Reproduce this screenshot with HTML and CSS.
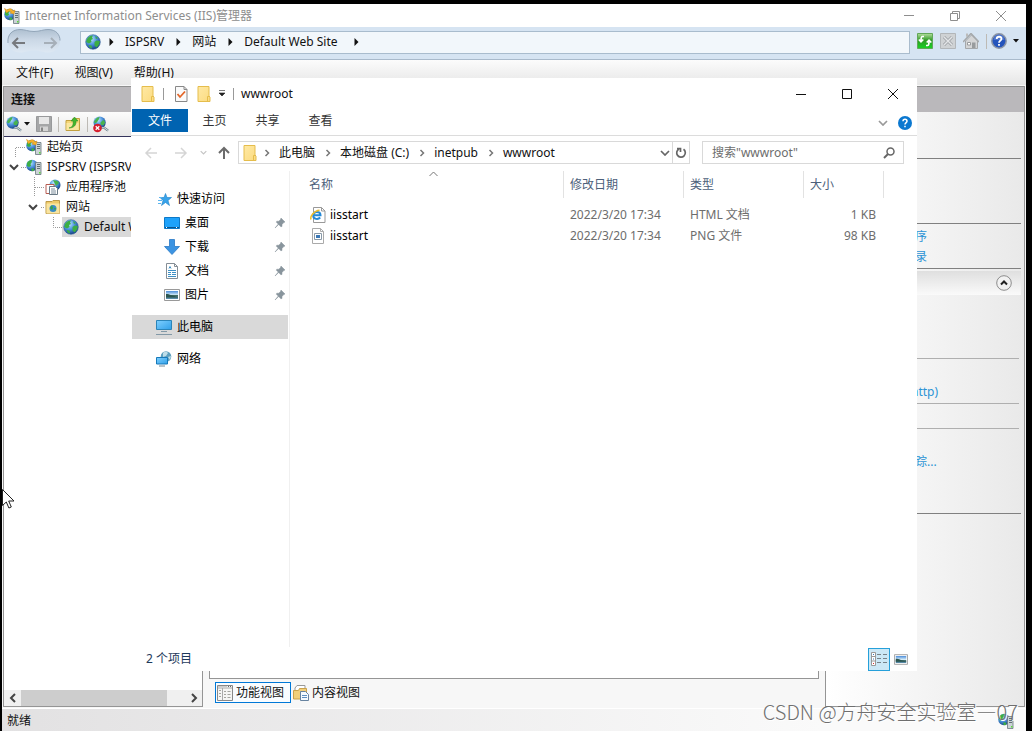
FILE: index.html
```html
<!DOCTYPE html>
<html lang="zh-CN">
<head>
<meta charset="utf-8">
<title>Internet Information Services (IIS)管理器</title>
<link rel="stylesheet" href="styles.css">
</head>
<body>
<svg class="defs" width="0" height="0" aria-hidden="true">
  <defs>
    <radialGradient id="sea" cx=".38" cy=".3" r=".75"><stop offset="0" stop-color="#b9e6ff"/><stop offset=".5" stop-color="#4a90dc"/><stop offset="1" stop-color="#123c7c"/></radialGradient>
    <linearGradient id="fold" x2="1" y2="1"><stop offset="0" stop-color="#ffe9a4"/><stop offset="1" stop-color="#fbdb80"/></linearGradient>
    <linearGradient id="screen" x2="1" y2="1"><stop offset="0" stop-color="#7fd0ff"/><stop offset="1" stop-color="#2f9fe8"/></linearGradient>
    <linearGradient id="photo" x2="0" y2="1"><stop offset="0" stop-color="#4b8ddb"/><stop offset=".5" stop-color="#d5ecf7"/><stop offset=".55" stop-color="#416b62"/><stop offset="1" stop-color="#5c8fb3"/></linearGradient>
    <linearGradient id="green" x2="0" y2="1"><stop offset="0" stop-color="#b5dfa0"/><stop offset=".45" stop-color="#2f9a25"/><stop offset="1" stop-color="#19d424"/></linearGradient>
    <linearGradient id="pillfill" x2="0" y2="1"><stop offset="0" stop-color="#aebfd0"/><stop offset=".45" stop-color="#cbd8e6"/><stop offset="1" stop-color="#dde8f3"/></linearGradient>
    <symbol id="globe" viewBox="0 0 16 16"><circle cx="8" cy="8" r="7.300" fill="url(#sea)" stroke="#31639c" stroke-width=".6"/><path d="M2 5c2-3 4-3.600 6-3.500l-1 2 1 1.500-2 1 .5 2L4 9.500 1.200 8zM9.500 8l2-1.500 3.300.500c0 3-1.500 5-3.300 6.500l-2-2zM10 2l3 2-2 1zM3.500 11l3 .5.5 3c-1.500 0-3-1.500-3.500-3.500z" fill="#3cae45"/></symbol>
    <symbol id="server" viewBox="0 0 16 16"><circle cx="6" cy="6.500" r="5.800" fill="url(#sea)"/><path d="M1 4c2-3 4-3 5-3l-.5 3-1 1 .5 2-2 1-2-1zM5.500 9l3 1-1 2.300-2-.3z" fill="#3cae45"/><path d="M9.500 3.500h5.500v12H9.500z" fill="#cbd3d6" stroke="#68777c" stroke-width=".8"/><path d="M11 5.500h3M11 7.500h3M11 9.500h3" stroke="#617073"/><path d="M13 13h1.500v1.500H13z" fill="#59dd35"/></symbol>
    <symbol id="home-server" viewBox="0 0 16 16"><use href="#server"/><path d="M.5.500 3 2c3-2 5-1.500 6 1l2-1-1 4-4-1 1.500-1C6 2.500 4 3 2.500 5z" fill="#f9b429" stroke="#d78b14" stroke-width=".5"/></symbol>
    <symbol id="folder" viewBox="0 0 16 16"><path d="M2 .5h11v9.500l1 1v4.500H2z" fill="url(#fold)" stroke="#e5bd4c"/><path d="M11.500 15v-4.500h2" fill="none" stroke="#e5bd4c"/></symbol>
    <symbol id="caret" viewBox="0 0 6 4"><path d="M0 0h6L3 3.500z" fill="currentColor"/></symbol>
    <symbol id="tri" viewBox="0 0 5 8"><path d="M.5 0v8l4-4z" fill="currentColor"/></symbol>
    <symbol id="chev-r" viewBox="0 0 6 8"><path d="m1.500 1 3 3-3 3" fill="none" stroke="currentColor" stroke-width="1.500"/></symbol>
    <symbol id="chev-d" viewBox="0 0 10 6"><path d="m1 1 4 4 4-4" fill="none" stroke="currentColor" stroke-width="1.700"/></symbol>
    <symbol id="pin" viewBox="0 0 12 12"><path d="m7 1 4 4-1.200.5-1.800 2L8 9.500 6.800 9.700 4.700 7.500 1 11l3.300-4L2.300 5.200l.5-1 2 0L6.500 2.500z" fill="#89959d" stroke="#89959d" stroke-width=".5"/></symbol>
    <symbol id="picture" viewBox="0 0 16 12"><path d="M.5.500h15v11H.5z" fill="#fff" stroke="#999"/><path d="M2 2h12v8H2z" fill="url(#photo)"/><path d="M2 5c4 0 6 2 12 3v.5H2z" fill="#2b5650"/></symbol>
    <symbol id="x" viewBox="0 0 12 12"><path d="m1 1 10 10M11 1 1 11" fill="none" stroke="currentColor"/></symbol>
    <symbol id="globe-tool" viewBox="0 0 18 18"><circle cx="7" cy="7" r="6.500" fill="url(#sea)"/><path d="M1 6c2-4 4-5 6-5L6 4l-2 3-2 1zM8 7l3-3 2 3-2 3-3-1z" fill="#48b34e"/><path d="M9 12.500h3l4 3" fill="none" stroke="#73838c" stroke-width="2.500"/><path d="M9 12.500h3l4 3" fill="none" stroke="#d8e5ec"/></symbol>
  </defs>
</svg>

<div class="app">
  <header class="titlebar">
    <svg class="i16"><use href="#home-server"/></svg>
    <h1>Internet Information Services (IIS)管理器</h1>
    <button class="cap" aria-label="最小化"><svg width="12" height="12" viewBox="0 0 12 12"><path d="M1 5.500h10" stroke="currentColor"/></svg></button>
    <button class="cap" aria-label="还原"><svg width="12" height="12" viewBox="0 0 12 12"><path d="M1.500 3.500h7v7h-7zM3.500 3.500v-2h7v7h-2" fill="none" stroke="currentColor"/></svg></button>
    <button class="cap" aria-label="关闭"><svg width="12" height="12"><use href="#x"/></svg></button>
  </header>

  <nav class="address" aria-label="地址">
    <button class="history" aria-label="后退和前进"><svg width="56" height="28" viewBox="0 0 56 28"><path d="M14 1.500c5 0 8 2 14 2s9-2 14-2c8 0 12 5 12 11s-4 12-12 12c-5 0-8-2-14-2s-9 2-14 2c-8 0-12-5-12-12s4-11 12-11z" fill="url(#pillfill)"/><path d="M2 15C1 6 7 1.500 14 1.500c5 0 8 2 14 2s9-2 14-2c8 0 12 5 12 11" fill="none" stroke="#93a6b9"/><path d="M19 15H7m5-5-5 5 5 5" fill="none" stroke="#76797d" stroke-width="2"/><path d="M38 15h12m-5-5 5 5-5 5" fill="none" stroke="#a6afb8" stroke-width="2"/></svg></button>
    <div class="crumbs">
      <svg class="i16"><use href="#globe"/></svg>
      <svg class="tri"><use href="#tri"/></svg><a href="#">ISPSRV</a>
      <svg class="tri"><use href="#tri"/></svg><a href="#">网站</a>
      <svg class="tri"><use href="#tri"/></svg><a href="#">Default Web Site</a>
      <svg class="tri"><use href="#tri"/></svg>
    </div>
    <div class="tools">
      <button aria-label="刷新"><svg width="16" height="16" viewBox="0 0 16 16"><path d="M.5.500h15v15H.5z" fill="url(#green)" stroke="#62a759"/><path d="M7 3.500H5.500C4 3.500 4 5 4 8M1.800 6.500 4 8.800l2.300-2.300M9 12.500h1.500c1.500 0 1.500-1.500 1.500-4M9.700 9.500 12 7.200l2.300 2.300" fill="none" stroke="#fff" stroke-width="1.700"/></svg></button>
      <button aria-label="停止"><svg width="16" height="16" viewBox="0 0 16 16"><path d="M.5.500h15v15H.5z" fill="#cfd2d4" stroke="#b2b6b9"/><path d="m4 4 8 8m0-8-8 8" stroke="#999da1" stroke-width="3"/><path d="m4 4 8 8m0-8-8 8" stroke="#e4e6e8" stroke-width="1.500"/></svg></button>
      <button aria-label="主页"><svg width="16" height="16" viewBox="0 0 16 16"><path d="M2.500 8v7.500h12V8l-6-6z" fill="#d4d5d6" stroke="#a5a8aa"/><path d="m0 9 8-8.500L16 9" fill="none" stroke="#a5a8aa" stroke-width="1.500"/><path d="M3 4V.5h2V3" fill="#bbb"/><path d="M9 9.500h3.500v5.500H9z" fill="#989b9d"/><path d="M4.500 9.500h3v2.500h-3z" fill="#fff" stroke="#989b9d"/></svg></button>
      <span class="divider"></span>
      <button class="drop" aria-label="帮助"><svg width="16" height="16" viewBox="0 0 16 16"><circle cx="8" cy="8" r="7.200" fill="#2454bc" stroke="#8c95a4" stroke-width="1.500"/><path d="M2.500 7a5.500 5.500 0 0 1 11 0z" fill="#7194de" opacity=".5"/><path d="M5.700 6c0-3 4.800-3 4.800 0C10.500 7.500 8 7.500 8 9.700M8 11v1.800" fill="none" stroke="#fff" stroke-width="1.800"/></svg><svg class="caret"><use href="#caret"/></svg></button>
    </div>
  </nav>

  <nav class="menu" aria-label="菜单">
    <button>文件(F)</button><button>视图(V)</button><button>帮助(H)</button>
  </nav>

  <main class="body">
    <section class="connections">
      <h2 class="panel-head">连接</h2>
      <div class="panel-tools">
        <button class="drop" aria-label="连接到"><svg width="17" height="17"><use href="#globe-tool"/></svg><svg class="caret"><use href="#caret"/></svg></button>
        <button aria-label="保存"><svg width="16" height="16" viewBox="0 0 16 16"><path d="M.5.500h15v15H.5z" fill="#a5a6a7" stroke="#98999b"/><path d="M3 1h10v7H3z" fill="#e7e7e7"/><path d="M4 10.500h8V15H4z" fill="#d4d4d4"/><path d="M5 11.500h2V15H5z" fill="#858585"/></svg></button>
        <span class="divider"></span>
        <button aria-label="向上"><svg width="16" height="16" viewBox="0 0 16 16"><path d="M1 4.500h6l1-2h6.500v12H1z" fill="#f5d678" stroke="#c2a03f"/><path d="M1.500 7h12v7h-12z" fill="#fae69f"/><path d="M4 12c4-1 4.500-4 4-7H6l3.500-4L13 5h-2c.5 4-2 7-7 7z" fill="#43b52d" stroke="#2b8b20" stroke-width=".5"/></svg></button>
        <span class="divider"></span>
        <button aria-label="断开连接"><svg width="17" height="17" viewBox="0 0 17 17"><use href="#globe-tool" width="17" height="17"/><circle cx="4.500" cy="12" r="4.300" fill="#d51d2b"/><path d="m2.700 10.200 3.600 3.600m0-3.600-3.600 3.600" stroke="#fff" stroke-width="1.300"/></svg></button>
      </div>
      <ul class="tree">
        <li><svg class="guide" width="22" height="20"><path d="M11.500 20V10.500H22" class="dots"/></svg><svg class="i16"><use href="#home-server"/></svg><span>起始页</span></li>
        <li><svg class="guide" width="22" height="20"><path d="m6 8 4 4 4-4" class="open"/><path d="M17 10.500h5" class="dots"/></svg><svg class="i16"><use href="#server"/></svg><span>ISPSRV (ISPSRV</span></li>
        <li><svg class="guide" width="41" height="20"><path d="M30.500 0v20M31 10.500h10" class="dots"/></svg><svg class="i16" viewBox="0 0 16 16"><circle cx="10" cy="6" r="5.500" fill="url(#sea)"/><path d="M8 1c3 1 5 0 6 3l-3 3z" fill="#48b34e"/><path d="M1 5.500h8v9H1z" fill="#fff" stroke="#b65b50"/><path d="M4.500 7.500h6l2 2v6h-8z" fill="#fff" stroke="#697985"/><path d="M6 10h4M6 12h5M6 14h5" stroke="#7c8e9c"/></svg><span>应用程序池</span></li>
        <li><svg class="guide" width="41" height="20"><path d="m25 8 4 4 4-4" class="open"/><path d="M37 10.500h4" class="dots"/></svg><svg class="i16" viewBox="0 0 16 16"><path d="M1 2.500h6l1-1h6.500v13H1z" fill="#efcb69" stroke="#bd9a49"/><path d="M1.500 4.500h13v10h-13z" fill="#f9e4a0"/><circle cx="8" cy="9.500" r="3.500" fill="#3a8cc8"/><path d="m5 9 2-3 1 3-1 2zM9 9l2 0-1 3z" fill="#39a547"/></svg><span>网站</span></li>
        <li><svg class="guide" width="58" height="20"><path d="M49.500 0v10.500H58" class="dots"/></svg><a class="current" href="#"><svg class="i16"><use href="#globe"/></svg><span>Default Web Site</span></a></li>
      </ul>
      <div class="hscroll">
        <button aria-label="向左滚动"><svg width="8" height="10" viewBox="0 0 8 10"><path d="M6 1 2 5l4 4" class="open"/></svg></button>
        <div class="track"><div class="thumb"></div></div>
        <button aria-label="向右滚动"><svg width="8" height="10" viewBox="0 0 8 10"><path d="m2 1 4 4-4 4" class="open"/></svg></button>
      </div>
    </section>

    <section class="center">
      <div class="panel-head"></div>
      <div class="canvas"></div>
      <div class="view-tabs">
        <button class="view active"><svg class="i16" viewBox="0 0 16 16"><path d="M.5.500h15v15H.5z" fill="#f6f6f4" stroke="#888"/><path d="M1 3h14M5.500 3v12" stroke="#aaa"/><path d="M1 1.500h9" stroke="#ccc"/><path d="M11 1.500h4" stroke="#666" stroke-dasharray="1 1"/><path d="M2 5.500h2m-2 3h2m-2 3h2M7 6.500h2m1.500 0h3M7 9.500h2m1.500 0h3M7 12.500h2m1.500 0h3" stroke="#a5a59f"/></svg>功能视图</button>
        <button class="view"><svg class="i16" viewBox="0 0 16 16"><path d="M2 3 4 .5h8v11H2z" fill="#fff" stroke="#999"/><path d="M.5 5.500h5l1-2h7V14H.5z" fill="#f1cf7a" stroke="#caa14b"/><path d="M7.500 6.500h5l3 3v6h-8z" fill="#f5faff" stroke="#6783a0"/><path d="M9 10.500h5m-5 2h5" stroke="#5e8fc0"/></svg>内容视图</button>
      </div>
    </section>

    <aside class="actions">
      <div class="panel-head"></div>
      <div class="group g1"></div>
      <div class="group g2"></div>
      <div class="group g3"><a href="#">序</a><a href="#">录</a></div>
      <div class="subhead"><button aria-label="折叠"><svg width="16" height="16" viewBox="0 0 16 16"><circle cx="8" cy="8" r="7.300" fill="#f2f2f2" stroke="#8c8c8c"/><path d="m5 9.500 3-3 3 3" fill="none" stroke="#222" stroke-width="2"/></svg></button></div>
      <div class="group light g4"></div>
      <div class="group light g5"><a href="#">http)</a></div>
      <div class="group light g6"></div>
      <div class="group g7"><a href="#">踪...</a></div>
    </aside>
  </main>

  <footer class="status"><span>就绪</span><svg class="i16"><use href="#server"/></svg></footer>

  <section class="explorer" aria-label="wwwroot">
    <header class="ex-title">
      <svg class="i16"><use href="#folder"/></svg><span class="bar"></span>
      <button class="props" aria-label="属性"><svg class="i16" viewBox="0 0 16 16"><path d="M2.500.500H11l3 3v12H2.500z" fill="#fafafa" stroke="#888"/><path d="M11 .5v3h3" fill="none" stroke="#888"/><path d="m4.500 8 2.500 3 5-5.500" fill="none" stroke="#e36527" stroke-width="1.800"/></svg></button>
      <button aria-label="新建文件夹"><svg class="i16"><use href="#folder"/></svg></button>
      <button class="customize" aria-label="自定义"><svg width="8" height="7" viewBox="0 0 8 7"><path d="M1 .5h6M1 3h6L4 6z" fill="#222" stroke="#222" stroke-width=".6"/></svg></button><span class="bar"></span>
      <h2>wwwroot</h2>
      <div class="caps">
        <button class="cap" aria-label="最小化"><svg width="12" height="12" viewBox="0 0 12 12"><path d="M1 6.500h10" stroke="currentColor"/></svg></button>
        <button class="cap" aria-label="最大化"><svg width="12" height="12" viewBox="0 0 12 12"><path d="M1.500 1.500h9v9h-9z" fill="none" stroke="currentColor"/></svg></button>
        <button class="cap" aria-label="关闭"><svg width="12" height="12"><use href="#x"/></svg></button>
      </div>
    </header>
    <nav class="ribbon" aria-label="功能区">
      <button class="file">文件</button><button>主页</button><button>共享</button><button>查看</button>
      <button class="expand" aria-label="展开功能区"><svg width="10" height="6" class="faint"><use href="#chev-d"/></svg></button>
      <button class="help" aria-label="帮助"><svg width="14" height="14" viewBox="0 0 14 14"><circle cx="7" cy="7" r="7" fill="#0b78d0"/><path d="M5 5.300C5 2.600 9 2.600 9 5.300 9 6.600 7 6.700 7 8.500M7 9.800v1.500" fill="none" stroke="#fff" stroke-width="1.500"/></svg></button>
    </nav>
    <div class="location">
      <button aria-label="后退"><svg width="14" height="12" viewBox="0 0 14 12"><path d="M13 6H2m5-5L2 6l5 5" fill="none" stroke="#d5d5d5" stroke-width="1.500"/></svg></button>
      <button aria-label="前进"><svg width="14" height="12" viewBox="0 0 14 12"><path d="M1 6h11M7 1l5 5-5 5" fill="none" stroke="#d5d5d5" stroke-width="1.500"/></svg></button>
      <button class="recent" aria-label="最近位置"><svg width="7" height="5" class="fainter"><use href="#chev-d"/></svg></button>
      <button aria-label="上移"><svg width="12" height="13" viewBox="0 0 12 13"><path d="M6 13V2M1 7l5-5 5 5" fill="none" stroke="#6b6b6b" stroke-width="2"/></svg></button>
      <div class="path">
        <svg class="i16"><use href="#folder"/></svg>
        <svg class="chev"><use href="#chev-r"/></svg><a href="#">此电脑</a>
        <svg class="chev"><use href="#chev-r"/></svg><a href="#">本地磁盘 (C:)</a>
        <svg class="chev"><use href="#chev-r"/></svg><a href="#">inetpub</a>
        <svg class="chev"><use href="#chev-r"/></svg><a href="#">wwwroot</a>
        <button class="history-drop" aria-label="历史记录"><svg width="10" height="6" class="mid"><use href="#chev-d"/></svg></button>
        <button class="reload" aria-label="刷新"><svg width="12" height="12" viewBox="0 0 12 12"><path d="M8.500 2.300a4.300 4.300 0 1 1-4.500-.3M2 1.500h3.500V5" fill="none" stroke="#666" stroke-width="1.700"/></svg></button>
      </div>
      <label class="search"><input type="text" aria-label="搜索" placeholder='搜索"wwwroot"'><svg width="12" height="12" viewBox="0 0 12 12"><circle cx="7.500" cy="4.500" r="3.500" fill="none" stroke="#666" stroke-width="1.500"/><path d="M5 7 1 11" stroke="#666" stroke-width="2"/></svg></label>
    </div>
    <div class="ex-body">
      <nav class="places" aria-label="导航窗格">
        <a href="#"><svg class="i16" viewBox="0 0 16 16"><path d="m9.500 2.500 1.500 4h4.500L12 9.500l1.500 5-4-3-4 3L7 9.500 4 6.500h4z" fill="#38a3ea" stroke="#1e82c8" stroke-width=".6"/><path d="M3 6.500h3M2 9.500h4M2 12.500h3" stroke="#58b4ef"/></svg>快速访问</a>
        <a class="sub" href="#"><svg class="i16" viewBox="0 0 16 16"><path d="M.5 2.500h15v11H.5z" fill="#1ea2fb" stroke="#0c79c8"/><path d="M1 12.500h14" stroke="#0b558f"/><path d="M2 12.500h2m8 0h2" stroke="#fff" stroke-dasharray="1 1"/></svg>桌面<svg class="pin"><use href="#pin"/></svg></a>
        <a class="sub" href="#"><svg class="i16" viewBox="0 0 16 16"><path d="M5.500.500h5v7h5L8 15.500.5 7.500h5z" fill="#3c94e2" stroke="#2878c5" stroke-width=".8"/></svg>下载<svg class="pin"><use href="#pin"/></svg></a>
        <a class="sub" href="#"><svg class="i16" viewBox="0 0 16 16"><path d="M2.500.500h8l3 3v12h-11z" fill="#fff" stroke="#858e96"/><path d="M10.500.500v3h3" fill="none" stroke="#858e96"/><path d="M4 7.500h8M4 9.500h3m1 0h4M4 11.500h3m1 0h4M4 13.500h8M5 5.500l1-2 1 2" fill="none" stroke="#3e90c5"/></svg>文档<svg class="pin"><use href="#pin"/></svg></a>
        <a class="sub" href="#"><svg width="16" height="12"><use href="#picture"/></svg>图片<svg class="pin"><use href="#pin"/></svg></a>
        <a class="top selected" href="#"><svg class="i16" viewBox="0 0 16 16"><path d="M.5 1.500h15v9H.5z" fill="url(#screen)" stroke="#2b84b8"/><path d="M5 12.500h6M0 15.500h16" stroke="#8298a6"/></svg>此电脑</a>
        <a class="top" href="#"><svg class="i16" viewBox="0 0 16 16"><circle cx="10" cy="5.500" r="5.300" fill="#5d9fbe"/><path d="M7 2c2-2 4-1 5 0l-2 3-3 1zM12 6l3-1-1 4z" fill="#bedde8"/><path d="M.5 6.500h11v6.500H.5z" fill="url(#screen)" stroke="#1679b9"/><path d="M3 15h6" stroke="#6f8794"/></svg>网络</a>
      </nav>
      <div class="files">
        <table>
          <thead><tr><th class="c-name"><svg class="sort" width="9" height="6" viewBox="0 0 9 6"><path d="m.5 5 4-4 4 4" fill="none" stroke="#777"/></svg>名称</th><th class="c-date">修改日期</th><th class="c-date">类型</th><th class="c-size">大小</th></tr></thead>
          <tbody>
            <tr><td class="name"><a href="#"><svg class="i16" viewBox="0 0 16 16"><path d="M3.500.500h8l3.500 3.500v11.500H3.500z" fill="#fff" stroke="#999"/><path d="M11.500.500V4H15" fill="none" stroke="#999"/><path d="M3.200 8.300h7.300c0-4-7.300-4.600-7.300.2 0 4 5 4.300 7 2" fill="none" stroke="#2589d6" stroke-width="2"/><path d="M1.200 12.500C-.5 10 4 3.500 9.500 3.200" fill="none" stroke="#f0bd28" stroke-width="1.500"/></svg>iisstart</a></td><td>2022/3/20 17:34</td><td>HTML 文档</td><td class="num">1 KB</td></tr>
            <tr><td class="name"><a href="#"><svg class="i16" viewBox="0 0 16 16"><path d="M2.500.500h8l3 3v12h-11z" fill="#fff" stroke="#aaa"/><path d="M10.500.500v3h3" fill="none" stroke="#aaa"/><path d="M4.500 5.500h7v6h-7z" fill="#fff" stroke="#8a9aa8"/><path d="M6 7h4v3H6z" fill="#3b78b6"/></svg>iisstart</a></td><td>2022/3/20 17:34</td><td>PNG 文件</td><td class="num">98 KB</td></tr>
          </tbody>
        </table>
      </div>
    </div>
    <footer class="ex-status"><span>2 个项目</span>
      <button class="details" aria-label="详细信息"><svg width="17" height="14" viewBox="0 0 17 14"><path d="M.5.500h4v13h-4zM.5 4.500h4M.5 9h4" fill="#fff" stroke="#999"/><path d="M2 2.500h1" stroke="#3579ba"/><path d="M2 7h1" stroke="#3579ba"/><path d="M2 11.500h1" stroke="#d33"/><path d="M6 2.500h4m2 0h4M6 6.500h4m2 0h4M6 10.500h4m2 0h4" stroke="#77838a"/></svg></button>
      <button class="large" aria-label="大图标"><svg width="14" height="11"><use href="#picture"/></svg></button>
    </footer>
  </section>

  <svg class="cursor" width="13" height="20" viewBox="0 0 13 20"><path d="M.5.500v16l3.800-3.500 2.600 6 2.400-1-2.600-6h5.300z" fill="#fff" stroke="#222"/></svg>
  <p class="watermark">CSDN @方舟安全实验室—07</p>
</div>
</body>
</html>
```
FILE: styles.css
```css
* { box-sizing: border-box; }
body {
  margin: 0;
  height: 100vh;
  padding: 4px 6px 0 2px;
  background: #000;
  color: #111;
  font: 12px/20px "Noto Sans", "Noto Sans CJK SC", sans-serif;
  overflow: hidden;
}
h1, h2, p, ul { margin: 0; padding: 0; font-size: 12px; font-weight: 400; }
ul { list-style: none; }
a { color: inherit; text-decoration: none; }
button { margin: 0; padding: 0; border: 0; background: none; font: inherit; color: inherit; display: flex; align-items: center; justify-content: center; }
svg { display: block; flex: none; }
.defs { position: absolute; }
.i16 { width: 16px; height: 16px; }
.tri { width: 5px; height: 8px; }
.caret { width: 6px; height: 4px; }
.chev { width: 6px; height: 8px; color: #777; }
.dots { fill: none; stroke: #999; stroke-dasharray: 1 1; }
.open { fill: none; stroke: #444; stroke-width: 2; }
.divider { width: 1px; height: 15px; background: #bdbab5; }

.app { position: relative; height: 100%; display: flex; flex-direction: column; background: #f7f7f7; }

.titlebar { height: 23px; display: flex; align-items: center; padding: 0 2px; background: #fff; color: #8e8e8e; }
.titlebar h1 { flex: 1; margin-left: 5px; white-space: nowrap; }
.cap { width: 46px; height: 22px; }

.address { height: 33px; display: flex; align-items: center; padding: 0 7px 2px 4px; background: #d6e4f2; border-bottom: 1px solid #a9bacb; }
.crumbs { flex: 1; height: 23px; margin-left: 18px; padding: 0 4px; display: flex; align-items: center; gap: 12px; border: 1px solid #a9bccd; background: #f2f7fb; }
.crumbs .i16 { margin-right: -4px; }
.crumbs a { margin-left: -1px; }
.crumbs a:last-of-type { margin-right: 4px; }
.tools { display: flex; align-items: center; gap: 7px; margin-left: 7px; padding-bottom: 2px; }
.tools .drop { gap: 6px; margin-left: -3px; }

.menu { height: 25px; display: flex; align-items: center; gap: 21px; padding: 0 14px; background: linear-gradient(#fcfcfc, #e6e6e6); }

.body { flex: 1; min-height: 0; display: flex; padding: 1px; }
.panel-head { height: 26px; flex: none; padding: 3px 7px; border-top: 1px solid #8f8f8f; background: #bab8bb; font-weight: 700; }
.connections { width: 200px; display: flex; flex-direction: column; border: 1px solid #959595; border-top: 0; background: #fff; }
.panel-tools { height: 25px; display: flex; align-items: center; gap: 6px; padding: 0 2px; border-bottom: 1px solid #34345c; background: linear-gradient(#fcfcfc, #e6e6e6); }
.panel-tools .drop { gap: 1px; }
.panel-tools button:last-child { margin-left: -1px; }
.tree { flex: 1; overflow: hidden; white-space: nowrap; }
.tree li { height: 20px; display: flex; align-items: center; }
.tree span { margin-left: 5px; }
.tree .current { height: 20px; display: flex; align-items: center; padding: 0 2px 0 1px; background: #d9d9d9; }
.hscroll { height: 16px; display: flex; background: #f0f0f0; }
.hscroll button { width: 17px; }
.track { flex: 1; display: flex; }
.thumb { width: 89%; background: #cdcdcd; }

.center { flex: 1; display: flex; flex-direction: column; }
.canvas { flex: 1; margin: 0 6px; border: 1px solid #959595; border-top: 0; background: #fff; }
.view-tabs { display: flex; padding: 3px 12px 4px; }
.view { height: 21px; padding: 0 1px; gap: 3px; border: 1px solid transparent; }
.view.active { padding: 0 6px 0 1px; border-color: #0078d7; background: #f9fcff; }

.actions { width: 200px; border: 1px solid #959595; border-top: 0; background: linear-gradient(90deg, #fff, #e9e9e9); }
.group { margin-right: 3px; border-bottom: 1px solid #808080; }
.group a { display: block; height: 20px; padding-left: 89px; color: #2c93d5; }
.light { margin-right: 5px; border-color: #afafaf; }
.g1 { height: 47px; }
.g2 { height: 65px; }
.g3 { height: 45px; padding-top: 3px; }
.g4 { height: 64px; }
.g5 { height: 45px; padding-top: 23px; }
.g5 a { padding-left: 85px; }
.g6 { height: 25px; }
.g7 { height: 85px; padding-top: 23px; }
.subhead { height: 24px; margin: 2px 3px 0 0; padding: 0 9px; display: flex; align-items: center; justify-content: flex-end; background: linear-gradient(#dfdfdf, #fafafa); }

.status { height: 23px; display: flex; align-items: center; justify-content: space-between; padding: 1px 12px 0 5px; border-top: 1px solid #fff; background: linear-gradient(90deg, #e2e1e2, #fafafa 80%); }

.explorer { position: absolute; top: 74px; right: 109px; bottom: 60px; left: 129px; display: flex; flex-direction: column; background: #fff; }
.ex-title { height: 31px; display: flex; align-items: center; padding-left: 9px; gap: 7px; }
.ex-title h2 { flex: 1; }
.ex-title .bar { width: 1px; height: 12px; background: #999; }
.props { margin-left: 2px; }
.caps { display: flex; margin-right: 1px; }
.customize { width: 8px; margin-left: -1px; }
.ribbon { height: 27px; display: flex; align-items: flex-start; padding-left: 1px; border-bottom: 1px solid #dcdcdc; color: #333; }
.ribbon button { width: 53px; height: 23px; padding-top: 1px; }
.ribbon .file { width: 56px; background: #0063b1; color: #fff; }
.ribbon .expand { width: 20px; height: 26px; margin-left: auto; }
.ribbon .help { width: 24px; height: 26px; }
.faint { color: #999; }
.fainter { color: #c4c4c4; }
.mid { color: #666; }
.location { height: 33px; display: flex; align-items: center; padding: 0 13px; gap: 16px; }
.recent { margin: 0 -5px 0 -4px; }
.path { flex: 1; height: 23px; display: flex; align-items: center; gap: 10px; margin-left: -8px; padding-left: 3px; border: 1px solid #d9d9d9; white-space: nowrap; }
.path .i16 { margin-right: -4px; }
.path a { margin-left: -1px; }
.history-drop { margin-left: auto; }
.reload { width: 17px; height: 21px; margin-left: -8px; border-left: 1px solid #d9d9d9; }
.search { width: 202px; height: 23px; margin-left: -4px; display: flex; align-items: center; padding: 0 8px; border: 1px solid #d9d9d9; }
.search input { flex: 1; min-width: 0; height: 21px; padding: 0 1px; border: 0; outline: 0; background: none; font: inherit; color: #666; }
.search input::placeholder { color: #6d6d6d; opacity: 1; }

.ex-body { flex: 1; min-height: 0; display: flex; padding-top: 2px; }
.places { width: 159px; padding: 16px 1px 0; border-right: 1px solid #f0f0f0; color: #000; }
.places a { height: 24px; display: flex; align-items: center; gap: 5px; padding-left: 24px; }
.places .sub { padding-left: 32px; }
.places .top { margin-top: 8px; }
.places .selected { background: #d9d9d9; }
.pin { width: 12px; height: 12px; margin: 0 2px 0 auto; }
.files { flex: 1; padding-left: 13px; }
table { border-collapse: separate; border-spacing: 0; table-layout: fixed; width: 581px; max-width: 100%; color: #6d6d6d; }
th { position: relative; height: 27px; padding: 0 6px; border-right: 1px solid #e2e2e2; color: #4c607a; font-weight: 400; text-align: left; }
.sort { position: absolute; top: 0; left: 126px; }
.c-date { width: 120px; }
.c-size { width: 80px; }
td { height: 21px; padding: 0 6px; line-height: 20px; }
tbody::before { content: ""; display: block; height: 6px; }
td a { display: flex; align-items: center; gap: 4px; padding-left: 1px; color: #000; }
.num { padding-right: 8px; text-align: right; }
.ex-status { height: 24px; display: flex; align-items: center; padding: 0 9px 0 15px; color: #1e395b; }
.details { width: 22px; height: 23px; margin: 0 4px 0 auto; border: 1px solid #26a0da; background: #cce8f6; }

.cursor { position: absolute; top: 485px; left: 0; }
.watermark { position: absolute; right: 8px; bottom: 5px; font: 300 20px/28px "Noto Sans CJK SC", sans-serif; color: #6f6f6f; text-shadow: 1px 1px 0 #fff; }
```
